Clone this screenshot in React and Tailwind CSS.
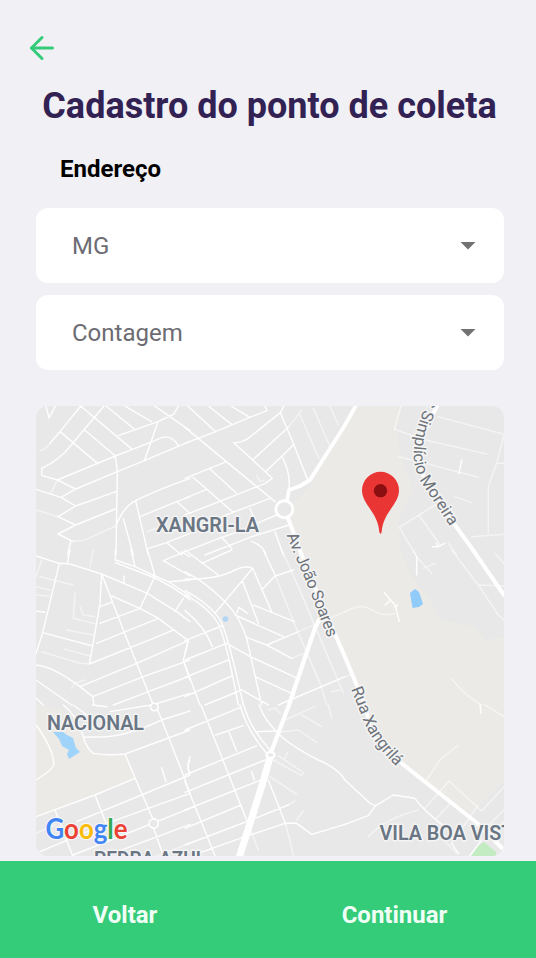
import { ArrowLeft } from "lucide-react";

// The map is drawn in nine tiles; each tile uses units of a third of a pixel.
const TILES = [
  {
    x: 30, y: 400,
    streets: "M48 18L57 54L76 18M152 18L90 95L60 130M222 18L128 130Q90 180 35 205L35 226L82 240L137 267M90 95L200 188M152 18L304 146M164 90L256 168L262 215L258 465M228 18L313 87M284 18L365 65M374 18L480 92M445 18L432 42L384 65L265 107M82 240L256 168L375 122Q420 95 445 137M384 65L343 182M93 292L137 267L262 215L343 182L480 124M18 268L93 292L137 318M84 350L137 318L258 275M84 350L137 375M84 402L137 375L256 327M84 402L128 424M258 378Q280 320 317 302Q380 270 480 235M317 302L355 465M280 355L310 465M330 350L440 305L480 290M440 305L480 340M355 445L410 428L480 400M410 428L455 465M122 424L113 465",
    faint: "M60 130Q45 150 30 152M128 424L160 422L258 378M82 240L62 282M18 330L84 350M350 395L380 385",
  },
  {
    x: 185, y: 400,
    streets: "M8 18L92 95M70 18L140 73M138 18L194 52M0 130L92 95L194 52L246 32L240 18M0 82L124 185L270 305M297 18L286 38L190 115Q170 128 146 128L203 180L262 235M286 38L325 130L368 240M203 180L310 82M242 215L325 135M292 172Q317 220 312 265M0 235L124 185M262 235L240 250L110 302L0 345M24 232L145 337M0 295L65 268M75 207L153 278M255 295L110 350M195 325L215 375M215 370L275 345M0 455L110 412L220 375M110 412L140 445M60 465L200 410L312 375M270 395L295 465M200 425Q235 435 242 465",
    faint: "M310 82L350 30M345 45L402 175M385 25L434 138M435 18L460 75M215 225L225 245L238 240",
  },
  {
    x: 345, y: 400,
    streets: "M350 180L342 220M262 440L280 440L300 430M280 440L274 430",
    faint: "M168 18L148 88L240 120L425 162M280 50L477 103M477 105L455 190L430 260L430 400M455 190L477 190M160 170L200 180M240 190L400 232M330 290L380 308M270 315L163 382L212 465M222 345L285 435M310 430L335 465M380 410L477 403",
  },
  {
    x: 30, y: 550,
    streets: "M18 18L88 40L120 42L215 72L352 130L440 185L480 215M120 0L112 40M88 40L38 248L18 310M38 248L188 288M215 72L210 160L188 288L178 342M215 72L282 245L320 340L370 465M178 342L370 265L430 240M200 280L385 205M210 220L330 175M210 170L245 157M245 138L330 175L385 205L475 272M330 175L375 78Q365 40 352 0M256 0L256 30L315 50L375 78L415 95L480 90M303 0L315 50M256 38L375 84Q430 110 480 150M415 95L480 138M400 32L465 5M400 32L480 78M455 5L480 20M435 185L460 145M282 100L282 78M18 345Q70 350 150 410L188 440L192 465M150 410L320 340L475 272L460 330L480 390M188 440L340 380L480 330M250 465L355 425L480 378M375 462L480 430M18 390L125 465M18 445L40 465M18 183L45 187",
    faint: "M190 0L180 50M35 305L150 340L178 342M105 298L180 318M110 240L190 255M35 30L18 80M30 80L130 105M135 130L130 205L200 222M150 170L160 195L195 200M18 110L60 120M18 135L58 138M125 415L135 400L165 390",
  },
  {
    x: 185, y: 550,
    streets: "M0 0L100 75M50 40L140 0M0 88Q100 88 150 60Q180 45 203 55L260 185M203 55L90 190M0 65Q60 95 120 155Q165 200 185 265L230 465M0 122Q80 165 108 215Q130 260 175 465M0 134Q70 172 98 218Q122 262 160 465M0 182Q60 230 82 290M172 92L220 220M205 165L328 215M150 195L300 262M155 190L162 172L188 190M185 262L245 285L320 325M245 285L300 262L340 245M0 272L110 228M0 330L125 280M0 382L130 330M0 440L140 378M125 280L200 322L332 382M210 380L320 430M60 465L170 420L250 465M0 345L45 465M10 270L0 310M235 0L270 75M230 120L270 78L325 60M280 465L480 380",
    faint: "M270 75L330 225L405 400L425 465M290 0L340 110L475 430M320 325L370 305M340 245L480 185M440 425L465 420",
  },
  {
    x: 345, y: 550,
    streets: "M215 20L215 75M118 128L150 165L163 215M120 165L138 150M150 172L158 165",
    faint: "M205 0L215 20L260 70M235 55L270 40M0 185Q50 155 90 185Q120 200 148 190M320 385Q350 430 410 465M450 10L477 40M0 380L18 375M320 0L400 105L460 195L477 210M400 105L477 108",
  },
  {
    x: 30, y: 705,
    streets: "M100 0Q140 30 160 95Q170 130 190 145Q230 152 285 147L480 75M130 0L195 48M240 20L365 0M160 97L230 95Q300 90 395 45L480 18M383 15L415 95L460 210L480 265M188 0L230 5M285 147L315 218L370 345M18 335L195 270L315 220M140 350L480 210M195 270L240 385M75 315L128 452M30 440L230 355L480 265M130 450L480 310M371 370L400 452M230 452L480 358M395 188L408 230M480 165Q468 185 480 205M18 60Q70 130 72 180Q60 200 18 225",
    faint: "M18 385L75 360M380 452L480 415",
  },
  {
    x: 185, y: 705,
    streets: "M0 75L165 8M48 0L185 345M165 0Q185 75 245 145M176 0Q195 70 255 135M222 0Q240 50 290 95Q330 130 400 165Q460 190 480 225M92 90L175 62M132 82L155 138M0 210L215 122M0 262L240 165M12 200Q5 180 15 155M0 315L235 222M200 200L208 225M0 370L168 300M0 420L190 348L310 300M20 452L180 395L300 355L335 355L380 388L480 358M0 230L90 452M250 225L303 360M215 80L270 78",
    faint: "M185 345L220 435M303 360L325 450M300 45L390 5M265 165L350 212L355 203L280 152M255 215L335 268M350 30L410 65M290 80L340 75L395 112M430 0L440 40M335 345L355 318M310 300L330 288M250 15L270 8L285 25M300 160L308 140",
  },
  {
    x: 345, y: 705,
    streets: "M0 225L75 295L92 302M0 358L70 332L92 302L145 270L210 280Q230 310 290 358M405 0L408 25M320 415L340 445M375 452L410 405",
    faint: "M245 225L285 165L340 120M240 310L312 228L410 318L477 245M70 395Q120 340 220 315M275 340L320 290M290 400L335 445M320 415L400 300M420 0L477 35M410 380L477 315M440 390L477 350",
  },
];

const GOOGLE = [
  ["G", "#4285f4"],
  ["o", "#ea4335"],
  ["o", "#fbbc05"],
  ["g", "#4285f4"],
  ["l", "#34a853"],
  ["e", "#ea4335"],
];

function MapView() {
  return (
    <svg viewBox="36 406 468 450" className="block h-full w-full font-[Roboto,sans-serif]">
      <rect x="36" y="406" width="468" height="450" fill="#e8e8e8" />
      {/* open land */}
      <path d="M355 406L310 486L287 510L299 552L345 655L365 710L400 762L470 815L504 780V637L485 640L475 627L440 620L430 600L412 577L400 550L398 520L413 490L402 462L396 430L402 406Z" fill="#ebeae6" />
      <path d="M36 705L60 708L84 738L92 753L125 755L135 778L97 794L36 817Z" fill="#ebeae6" />
      {/* water and park */}
      <path d="M410 593L415 589L419 592L423 604L419 607L412.500 608Z" fill="#90cbf9" />
      <path d="M53 732L63 732L67 735L73 738L76 748L80 752L69 759L67 754L69 750L62 746L59 739Z" fill="#9fd3fa" />
      <circle cx="225.500" cy="619" r="2.800" fill="#b3d6f5" />
      <path d="M471 856L478 846L484 842L496 852V856Z" fill="#c3ecc3" />

      <g fill="none" stroke="#fff" strokeLinejoin="round" strokeLinecap="round">
        {TILES.map((t) => (
          <g key={`${t.x}-${t.y}`} transform={`translate(${t.x} ${t.y}) scale(0.33333)`}>
            <path d={t.faint} strokeWidth="4.500" opacity="0.5" />
            <path d={t.streets} strokeWidth="4.300" opacity="0.95" />
          </g>
        ))}
        {/* avenues */}
        <path d="M359 400L345 425L310 480L300 486L289 490L287 501" strokeWidth="3.800" />
        <path d="M288 518L302 556L320 600L345 657L365 705L372 735L400 762L477 823L502 848" strokeWidth="4" />
        <path d="M437 406L423 434Q417 460 425 480L455 525L473 550L504 595" strokeWidth="4" />
        <path d="M319 620L315 628L289 705L270 755" strokeWidth="4.200" />
        <path d="M270 757L264 779L239 858" strokeWidth="7" strokeLinecap="butt" />
        <circle cx="284.300" cy="509.300" r="8.500" strokeWidth="3" fill="#e8e8e8" />
        <ellipse cx="270.500" cy="755" rx="4" ry="3" strokeWidth="2.500" fill="#e8e8e8" />
        <circle cx="154.300" cy="707" r="3.800" strokeWidth="1.600" fill="#e8e8e8" />
        <circle cx="153.700" cy="823.500" r="4.600" strokeWidth="1.600" fill="#e8e8e8" />
      </g>

      <defs>
        <path id="joao" d="M286.500 535L292 549L299 565L311 594L329 641" />
        <path id="xangrila" d="M351 689L360 712Q369 740 398 768" />
        <path id="simplicio" d="M429 398Q414 428 413.500 456Q415 473 423 485L455 534" />
      </defs>
      <g fill="#6e737a" stroke="#f4f4f4" strokeWidth="3" strokeLinejoin="round" paintOrder="stroke" fontSize="16.500">
        <text><textPath href="#joao" textLength="111">Av. João Soares</textPath></text>
        <text><textPath href="#xangrila" textLength="91">Rua Xangrilá</textPath></text>
        <text><textPath href="#simplicio" textLength="141">s Simplício Moreira</textPath></text>
      </g>
      <g fill="#6a7684" stroke="#f4f4f4" strokeWidth="3" strokeLinejoin="round" paintOrder="stroke" fontSize="20.500" fontWeight="600">
        <text x="156" y="532" textLength="103" lengthAdjust="spacingAndGlyphs">XANGRI-LA</text>
        <text x="47" y="730" textLength="97" lengthAdjust="spacingAndGlyphs">NACIONAL</text>
        <text x="379.500" y="840" textLength="146" lengthAdjust="spacingAndGlyphs">VILA BOA VISTA</text>
        <text x="94" y="866" textLength="112" lengthAdjust="spacingAndGlyphs">PEDRA AZUL</text>
      </g>

      <text x="45.500" y="839" fontSize="28" fontWeight="700" textLength="82" lengthAdjust="spacingAndGlyphs" stroke="#f6f6f6" strokeWidth="2.500" paintOrder="stroke" className="font-[Lato,sans-serif]">
        {GOOGLE.map(([letter, color], i) => (
          <tspan key={i} fill={color}>{letter}</tspan>
        ))}
      </text>

      {/* location pin */}
      <g transform="translate(345 400) scale(0.33333)">
        <path d="M51 271a55.500 55.500 0 0 1 111 0C162 314 114 336 110 396Q106.500 406 103 396C99 336 51 314 51 271Z" fill="#ea3535" />
        <circle cx="106.500" cy="272" r="20" fill="#8b0e11" />
      </g>
    </svg>
  );
}

function Select({ value }) {
  return (
    <button className="flex h-[75px] w-full items-center justify-between rounded-xl bg-white pr-7 pl-9 text-2xl text-[#6c6c72]">
      <span>{value}</span>
      <svg viewBox="0 0 16 8" className="h-2 w-4" fill="#727272">
        <path d="M0.500 0H15.500L8 7.500Z" />
      </svg>
    </button>
  );
}

export default function App() {
  return (
    <div className="flex h-[958px] w-[536px] flex-col overflow-hidden bg-[#f0f0f5] font-[Roboto,sans-serif]">
      <header className="flex flex-col pt-[30px]">
        <button className="ml-6 size-9" aria-label="Voltar">
          <ArrowLeft className="size-9 text-[#34cb79]" strokeWidth={2} />
        </button>
        <h1 className="mt-[17px] pl-[3px] text-center text-4xl leading-[46px] font-bold whitespace-nowrap text-[#322153]">
          Cadastro do ponto de coleta
        </h1>
      </header>
      <h2 className="mt-6 ml-[60px] text-2xl leading-8 font-bold text-black">Endereço</h2>
      <main className="mt-[23px] flex flex-col pr-8 pl-9">
        <div className="flex flex-col gap-3">
          <Select value="MG" />
          <Select value="Contagem" />
        </div>
        <div className="mt-9 h-[450px] overflow-hidden rounded-xl">
          <MapView />
        </div>
      </main>
      <footer className="mt-auto flex h-[97px] shrink-0 items-center bg-[#34cb79] pt-2.5 text-2xl font-bold text-[#f0fff6]">
        <button className="w-[250px]">Voltar</button>
        <button className="w-[286px] pl-[3px]">Continuar</button>
      </footer>
    </div>
  );
}
